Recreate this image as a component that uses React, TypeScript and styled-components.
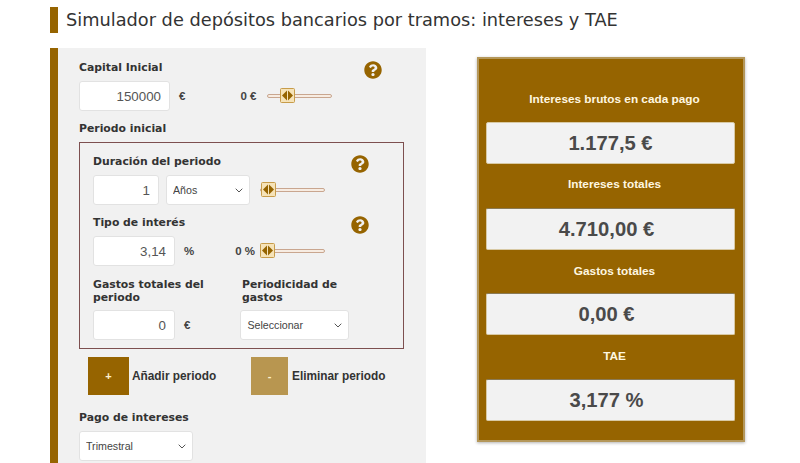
import React from "react";
import styled, { createGlobalStyle } from "styled-components";
import { FaQuestionCircle } from "react-icons/fa";

const brown = "#966400";
const chevron =
  "url(\"data:image/svg+xml,%3Csvg xmlns='http://www.w3.org/2000/svg' width='8' height='5' viewBox='0 0 8 5'%3E%3Cpath d='M.7.7 4 4 7.3.7' fill='none' stroke='%23555' stroke-width='1'/%3E%3C/svg%3E\")";

const Global = createGlobalStyle`
  html, body { margin: 0; padding: 0; height: 463px; overflow: hidden; background: #fff; }
`;

const Page = styled.div`
  padding: 7px 0 0 50px;
  color: #333;
  font-family: "Liberation Sans", Arial, sans-serif;
`;

const Title = styled.h1`
  margin: 0;
  height: 26px;
  border-left: 8px solid ${brown};
  padding-left: 8px;
  font: 400 17.76px/26px "DejaVu Sans", Verdana, sans-serif;
  color: #333;
`;

const Columns = styled.div`
  display: flex;
  align-items: flex-start;
  margin-top: 15px;
`;

const FormPanel = styled.section`
  box-sizing: border-box;
  width: 376px;
  height: 420px;
  border-left: 8px solid ${brown};
  background: #f1f1f1;
  padding: 13px 0 0 21px;
`;

const LabelRow = styled.div<{ $width: number; $top?: number }>`
  display: flex;
  justify-content: space-between;
  align-items: flex-start;
  width: ${(p) => p.$width}px;
  height: 19px;
  margin-top: ${(p) => p.$top ?? 0}px;
`;

const Label = styled.label`
  display: block;
  font: 700 10.85px/14px "DejaVu Sans", Verdana, sans-serif;
  color: #333;
`;

const SectionLabel = styled(Label)<{ $top: number }>`
  margin-top: ${(p) => p.$top}px;
`;

const Help = styled(FaQuestionCircle)`
  width: 18px;
  height: 18px;
  color: ${brown};
`;

const Controls = styled.div<{ $top?: number }>`
  display: flex;
  align-items: center;
  height: 30px;
  margin-top: ${(p) => p.$top ?? 1}px;
`;

const NumberInput = styled.input<{ $width: number }>`
  box-sizing: border-box;
  width: ${(p) => p.$width}px;
  height: 30px;
  border: 1px solid #e2e2e2;
  border-radius: 3px;
  background: #fff;
  padding: 0 8px;
  text-align: right;
  font: 400 13.33px "Liberation Sans", Arial, sans-serif;
  color: #555;
`;

const Unit = styled.span<{ $left: number }>`
  margin-left: ${(p) => p.$left}px;
  font: 700 11.5px "Liberation Sans", Arial, sans-serif;
  color: #444;
`;

const Dropdown = styled.select<{ $width: number; $left?: number }>`
  box-sizing: border-box;
  appearance: none;
  width: ${(p) => p.$width}px;
  height: 30px;
  margin-left: ${(p) => p.$left ?? 0}px;
  border: 1px solid #e2e2e2;
  border-radius: 3px;
  background: #fff ${chevron} no-repeat right 6px center;
  padding: 0 16px 0 6px;
  font: 400 10.67px "Liberation Sans", Arial, sans-serif;
  color: #444;
`;

const SliderTrack = styled.div<{ $left: number }>`
  position: relative;
  box-sizing: border-box;
  width: 65px;
  height: 4px;
  margin-left: ${(p) => p.$left}px;
  border: 1px solid #c9a68f;
  background: #f7ece2;
  border-radius: 2px;
`;

const SliderHandle = styled.svg<{ $at: number }>`
  position: absolute;
  top: -7px;
  left: ${(p) => p.$at}px;
  width: 15px;
  height: 15px;
`;

const Slider = ({ left, at }: { left: number; at: number }) => (
  <SliderTrack $left={left}>
    <SliderHandle $at={at} viewBox="0 0 15 15">
      <rect x="0.5" y="0.5" width="14" height="14" rx="1" fill="#f6e3b8" stroke="#c79c4a" />
      <path d="M7 2.5V12.5L2 7.5Z" fill={brown} />
      <path d="M8 2.5V12.5L13 7.5Z" fill={brown} />
    </SliderHandle>
  </SliderTrack>
);

const PeriodBox = styled.div`
  box-sizing: border-box;
  width: 325px;
  height: 207px;
  margin-top: 6px;
  border: 1px solid #7d4f4f;
  padding: 12px 0 0 13px;
`;

const TwoColumns = styled.div`
  display: grid;
  grid-template-columns: 149px 109px;
  margin-top: 12px;
`;

const WrapLabel = styled(Label)<{ $width: number }>`
  width: ${(p) => p.$width}px;
  height: 26px;
  line-height: 13px;
`;

const ActionRow = styled.div`
  display: flex;
  align-items: center;
  height: 38px;
  margin: 8px 0 0 9px;
`;

const SquareButton = styled.button<{ $width: number; $muted?: boolean }>`
  width: ${(p) => p.$width}px;
  height: 38px;
  padding: 0;
  border: 0;
  background: ${(p) => (p.$muted ? "#b89650" : brown)};
  color: #fff2cf;
  font: 700 11px "Liberation Sans", Arial, sans-serif;
`;

const ActionText = styled.span<{ $left: number; $width: number }>`
  width: ${(p) => p.$width}px;
  margin-left: ${(p) => p.$left}px;
  font: 700 11.85px "Liberation Sans", Arial, sans-serif;
  color: #333;
  white-space: nowrap;
`;

const ResultPanel = styled.aside`
  box-sizing: border-box;
  width: 268px;
  height: 385px;
  margin: 9px 0 0 51px;
  border: 2px solid #b4975a;
  box-shadow: 0 1px 3px rgba(0, 0, 0, 0.3);
  background: ${brown};
  padding: 0 8px 0 7px;
`;

const ResultLabel = styled.div<{ $top: number }>`
  margin-top: ${(p) => p.$top}px;
  height: 14px;
  padding-left: 8px;
  font: 700 11.8px/14px "Liberation Sans", Arial, sans-serif;
  color: #fff7e0;
  text-align: center;
`;

const ResultValue = styled.div<{ $top: number; $inset?: number }>`
  box-sizing: border-box;
  height: 42px;
  margin-top: ${(p) => p.$top}px;
  border: 1px solid #d8c9a4;
  border-top-color: ${(p) => (p.$inset ? "#8a7a55" : "#d8c9a4")};
  border-radius: 2px;
  background: #f2f2f2;
  padding-right: ${(p) => p.$inset ?? 0}px;
  font: 700 20.2px/40px "Liberation Sans", Arial, sans-serif;
  color: #4a4a4a;
  text-align: center;
`;

export default function App() {
  return (
    <Page>
      <Global />
      <Title>Simulador de depósitos bancarios por tramos: intereses y TAE</Title>
      <Columns>
        <FormPanel>
          <LabelRow $width={303}>
            <Label>Capital Inicial</Label>
            <Help />
          </LabelRow>
          <Controls>
            <NumberInput $width={91} defaultValue="150000" />
            <Unit $left={9}>€</Unit>
            <Unit $left={55}>0 €</Unit>
            <Slider left={11} at={12} />
          </Controls>
          <SectionLabel $top={11}>Periodo inicial</SectionLabel>
          <PeriodBox>
            <LabelRow $width={276}>
              <Label>Duración del periodo</Label>
              <Help />
            </LabelRow>
            <Controls $top={1}>
              <NumberInput $width={66} defaultValue="1" />
              <Dropdown $width={84} $left={7} defaultValue="Años">
                <option>Años</option>
                <option>Meses</option>
              </Dropdown>
              <Slider left={10} at={0} />
            </Controls>
            <LabelRow $width={276} $top={11}>
              <Label>Tipo de interés</Label>
              <Help />
            </LabelRow>
            <Controls $top={1}>
              <NumberInput $width={82} defaultValue="3,14" />
              <Unit $left={9}>%</Unit>
              <Unit $left={41}>0 %</Unit>
              <Slider left={5} at={-1} />
            </Controls>
            <TwoColumns>
              <WrapLabel $width={135}>Gastos totales del periodo</WrapLabel>
              <WrapLabel $width={109}>Periodicidad de gastos</WrapLabel>
            </TwoColumns>
            <Controls $top={6}>
              <NumberInput $width={82} defaultValue="0" />
              <Unit $left={9}>€</Unit>
              <Dropdown $width={109} $left={50} defaultValue="Seleccionar">
                <option>Seleccionar</option>
              </Dropdown>
            </Controls>
          </PeriodBox>
          <ActionRow>
            <SquareButton $width={41}>+</SquareButton>
            <ActionText $left={3} $width={119}>Añadir periodo</ActionText>
            <SquareButton $width={37} $muted>-</SquareButton>
            <ActionText $left={4} $width={93}>Eliminar periodo</ActionText>
          </ActionRow>
          <SectionLabel $top={16}>Pago de intereses</SectionLabel>
          <Controls $top={6}>
            <Dropdown $width={114} defaultValue="Trimestral">
              <option>Trimestral</option>
            </Dropdown>
          </Controls>
        </FormPanel>
        <ResultPanel>
          <ResultLabel $top={33}>Intereses brutos en cada pago</ResultLabel>
          <ResultValue $top={16}>1.177,5 €</ResultValue>
          <ResultLabel $top={13}>Intereses totales</ResultLabel>
          <ResultValue $top={17} $inset={8}>4.710,00 €</ResultValue>
          <ResultLabel $top={14}>Gastos totales</ResultLabel>
          <ResultValue $top={15} $inset={8}>0,00 €</ResultValue>
          <ResultLabel $top={14}>TAE</ResultLabel>
          <ResultValue $top={16} $inset={8}>3,177 %</ResultValue>
        </ResultPanel>
      </Columns>
    </Page>
  );
}
